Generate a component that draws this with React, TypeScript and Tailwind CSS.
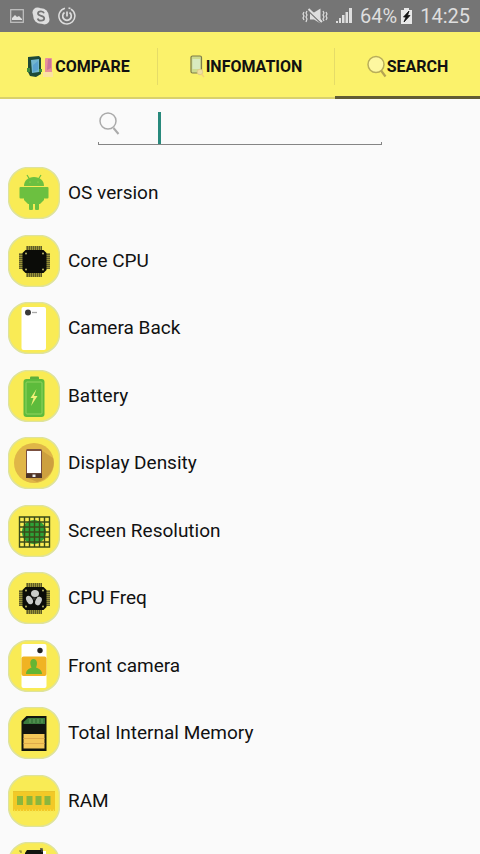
import type { ReactNode } from "react";

const Hole = ({ x, y }: { x: number; y: number }) => <circle cx={x} cy={y} r="1" fill="#b9b56a" />;

function ChipBody() {
  const pins = [18, 20, 22, 24, 26, 28, 30, 32];
  return (
    <g>
      {pins.map((p) => (
        <g key={p} fill="#3a3a1c">
          <rect x={p + 0.500} y="11" width="1.300" height="31" />
          <rect x="11" y={p + 0.500} width="31" height="1.300" />
        </g>
      ))}
      <path d="M17.500 15h18l3 3v17l-3 3h-18l-3-3V18z" fill="#0b0c08" />
      <Hole x={18} y={18.5} />
      <Hole x={35} y={18.5} />
      <Hole x={18} y={34.5} />
      <Hole x={35} y={34.5} />
    </g>
  );
}

const android = (
  <g fill="#6cc040">
    <path d="M16 19c0-5.500 4-9 10-9s10 3.500 10 9z" />
    <path d="M19 8l2.500 4M33 8l-2.500 4" stroke="#6cc040" strokeWidth="1.200" />
    <rect x="11.500" y="20" width="5" height="11.500" rx="1" />
    <rect x="35.500" y="20" width="5" height="11.500" rx="1" />
    <path d="M16 20h20v13l-4 4H20l-4-4z" />
    <rect x="21" y="34" width="4" height="9" rx="1" />
    <rect x="27" y="34" width="4" height="9" rx="1" />
    <circle cx="22" cy="15" r="0.600" fill="#b9db56" />
    <circle cx="30" cy="15" r="0.600" fill="#b9db56" />
  </g>
);

const cameraBack = (
  <g>
    <rect x="13.500" y="5" width="24.500" height="43" rx="2" fill="#fff" />
    <circle cx="20" cy="10.500" r="3" fill="#3a3a3a" />
    <path d="M24 10.500h5" stroke="#aaa" strokeWidth="1.300" />
  </g>
);

const battery = (
  <g>
    <rect x="22" y="6.500" width="9" height="4" rx="1" fill="#5faf3b" />
    <rect x="15.500" y="9" width="21" height="38" rx="3" fill="#5dbb3c" />
    <rect x="18" y="12" width="16" height="32" rx="1" fill="none" stroke="#91d45f" strokeWidth="1" />
    <path d="M28.500 19l-6 9h3l-2.500 8 6.500-10h-3.500z" fill="#f1f078" />
  </g>
);

const density = (
  <g>
    <circle cx="26" cy="26" r="20" fill="#e0b647" />
    <path d="M33 13l12 8c3 10-4 21-16 24l-11-5z" fill="#cda03f" />
    <rect x="18" y="12" width="16" height="29" rx="1.500" fill="#7b5040" />
    <rect x="19" y="14" width="14" height="22" fill="#fff" />
    <rect x="18" y="36.500" width="16" height="4.500" fill="#4d3428" />
    <rect x="24.500" y="37.500" width="3" height="2.500" fill="#eee" />
  </g>
);

const resolution = (
  <g>
    <circle cx="26" cy="27" r="12" fill="#2ea138" />
    <path
      d="M11.500 12h30v30h-30zM11.500 17h30M11.500 22h30M11.500 27h30M11.500 32h30M11.500 37h30M16.500 12v30M21.500 12v30M26.500 12v30M31.500 12v30M36.500 12v30"
      fill="none"
      stroke="#3b4b18"
      strokeWidth="1.400"
    />
  </g>
);

const cpuFan = (
  <g>
    <ChipBody />
    <g fill="#c9cbc9">
      <ellipse cx="27" cy="21.500" rx="4" ry="3.500" />
      <ellipse cx="21.500" cy="28" rx="3" ry="4.500" transform="rotate(-30 21.500 28)" />
      <ellipse cx="30.500" cy="29" rx="3" ry="4.500" transform="rotate(25 30.500 29)" />
    </g>
    <circle cx="26.300" cy="26.500" r="1.400" fill="#333" />
  </g>
);

const frontCamera = (
  <g>
    <rect x="13.500" y="4" width="25" height="44" rx="2" fill="#fff" />
    <circle cx="32" cy="10.500" r="2.700" fill="#222" />
    <rect x="13.500" y="16.500" width="25" height="19.500" rx="2" fill="#f0b323" />
    <path d="M18 34c0-4 3-5.500 5.500-6.500-2-4-1.500-8.500 2-8.500s4.500 4.500 2.500 8.500c3 1 6 2.500 6 6.500z" fill="#64b534" />
  </g>
);

const memoryCard = (
  <g>
    <path d="M18.500 9h20v35h-25V14z" fill="#11150f" />
    <path d="M20 11h17v6H15.500v-2z" fill="#3b7a3d" />
    <path d="M22 12v4M26 12v4M30 12v4M34 12v4" stroke="#62a15e" strokeWidth="1" />
    <rect x="15.500" y="27" width="21" height="14.500" fill="#f4c858" />
    <path d="M15.500 31.500h21M15.500 36.500h21" stroke="#dfab4a" strokeWidth="1" />
  </g>
);

const ram = (
  <g>
    <path d="M5 16h42v20H5z" fill="#f2c927" />
    <path d="M6 35.500h40" stroke="#f6e04a" strokeWidth="2" strokeDasharray="1 2" />
    <path d="M5 16.500h42" stroke="#e9c32b" strokeWidth="1" />
    <g fill="#8bb63c">
      <rect x="9" y="21" width="6" height="9" />
      <rect x="18.500" y="21" width="6" height="9" />
      <rect x="27.500" y="21" width="6" height="9" />
      <rect x="36.500" y="21" width="6" height="9" />
    </g>
  </g>
);

const externalCard = (
  <g>
    <path d="M19 8h16v28H17V11z" fill="#11150f" />
    <path d="M32 7h2v3" stroke="#444" strokeWidth="1.500" fill="none" />
    <path d="M11 9h2v2" stroke="#8a853c" strokeWidth="1.200" fill="none" />
    <path d="M35 9h3v8h-3z" fill="#fff" />
  </g>
);

const specs: { name: string; icon: ReactNode }[] = [
  { name: "OS version", icon: android },
  { name: "Core CPU", icon: <ChipBody /> },
  { name: "Camera Back", icon: cameraBack },
  { name: "Battery", icon: battery },
  { name: "Display Density", icon: density },
  { name: "Screen Resolution", icon: resolution },
  { name: "CPU Freq", icon: cpuFan },
  { name: "Front camera", icon: frontCamera },
  { name: "Total Internal Memory", icon: memoryCard },
  { name: "RAM", icon: ram },
];

function Badge({ children }: { children: ReactNode }) {
  return (
    <svg viewBox="0 0 52 52" className="size-[52px] shrink-0" aria-hidden="true">
      <rect x="0.500" y="0.500" width="51" height="51" rx="20" fill="#f9eb55" stroke="#dfe39a" strokeWidth="1.500" />
      {children}
    </svg>
  );
}

function StatusBar() {
  return (
    <header className="flex h-8 items-center justify-between bg-[#757575] px-[10px] text-[#dedede]">
      <div className="flex items-center gap-2">
        <svg viewBox="0 0 14 14" className="size-[14px]" aria-hidden="true">
          <rect x="0.700" y="0.700" width="12.600" height="12.600" fill="none" stroke="#c4c4c4" strokeWidth="1.200" />
          <path d="M2 11V9l3-3 2 2 2-1 3 3v1z" fill="currentColor" />
        </svg>
        <svg viewBox="0 0 18 18" className="size-[18px]" aria-hidden="true">
          <circle cx="5.500" cy="5.500" r="5" fill="currentColor" />
          <circle cx="12.500" cy="12.500" r="5" fill="currentColor" />
          <circle cx="9" cy="9" r="7.800" fill="currentColor" />
          <path
            d="M12 6.300C11.500 4.800 10.300 4.300 9 4.300c-1.700 0-3 .8-3 2.200 0 3 6.200 1.600 6.200 4.700 0 1.500-1.400 2.400-3.200 2.400-1.600 0-2.900-.7-3.300-2.200"
            fill="none"
            stroke="#757575"
            strokeWidth="1.800"
          />
        </svg>
        <svg viewBox="0 0 18 18" className="size-[18px]" fill="none" stroke="currentColor" aria-hidden="true">
          <path d="M7 1.200a8 8 0 1 0 6 .9M10.500 1.100l2 .5" strokeWidth="1.500" />
          <path d="M6.500 5.500a4.300 4.300 0 1 0 5 0M9 4.500v5" strokeWidth="1.700" />
        </svg>
      </div>
      <div className="flex items-center gap-2">
        <svg viewBox="0 0 26 16" className="h-4 w-[26px]" fill="none" stroke="currentColor" aria-hidden="true">
          <path d="M8 4.500h4l6.500-4v15l-6.500-4H8z" fill="currentColor" stroke="none" />
          <path d="M6.500 3L20 16" stroke="#757575" strokeWidth="1.500" />
          <path d="M6.500 1L20 14" strokeWidth="2" />
          <path
            d="M5 3l-1 2 1 2-1 2 1 2-1 3M2 4l-1 2 1 2-1 2 1 2M21 3l1 2-1 2 1 2-1 2 1 2M24 4l1 2-1 2 1 2-1 2"
            strokeWidth="1.200"
          />
        </svg>
        <svg viewBox="0 0 16 16" className="size-4" fill="currentColor" aria-hidden="true">
          <path d="M0 13h2v2H0zM3 10h2v5H3zM6 7h2.500v8H6zM9.500 4H12v11H9.500zM13 0h3v15h-3z" />
        </svg>
        <span className="text-[20px] leading-6">64%</span>
        <svg viewBox="0 0 11 16" className="-ml-1 h-4 w-[11px]" aria-hidden="true">
          <path d="M3 0h5v2h3v14H0V2h3z" fill="#e8e8e8" />
          <path d="M8 3L2.500 9H5l-2 5 6-6.500H6.500z" fill="#111" stroke="#111" strokeWidth="0.800" />
        </svg>
        <span className="text-[20px] leading-6">14:25</span>
      </div>
    </header>
  );
}

const compareIcon = (
  <svg viewBox="0 0 28 22" className="h-[22px] w-7" aria-hidden="true">
    <path d="M1 1l11-1 2 2v16l-5 3-6-1-2-4z" fill="#1d4a38" />
    <path d="M0 12h3v4H0zM12 13h3v3h-3z" fill="#3d8a3c" />
    <path d="M4 4l8-1v13l-7 1z" fill="#72b6cf" />
    <path d="M6 9l5-4v9l-5 2z" fill="#5aa2cf" />
    <rect x="18" y="2" width="7" height="15" rx="1" fill="#e9909a" />
    <path d="M21 3h3v9l-4 2z" fill="#c9749a" />
    <rect x="16" y="16" width="10" height="5" fill="#fbe3a0" />
  </svg>
);

const infoIcon = (
  <svg viewBox="0 0 16 26" className="h-[26px] w-4" aria-hidden="true">
    <rect x="1" y="2" width="10.500" height="17" rx="1.500" fill="#cddb8e" stroke="#7d7b49" strokeWidth="1.200" />
    <rect x="2.500" y="5" width="7.500" height="10" fill="#d8eac0" />
    <circle cx="10" cy="18" r="2.800" fill="#f0dfa0" stroke="#dcc687" strokeWidth="0.800" />
    <path d="M11.500 20l2.500 3" stroke="#f5cf80" strokeWidth="1.300" />
  </svg>
);

const searchTabIcon = (
  <svg viewBox="0 0 20 24" className="h-6 w-5" aria-hidden="true">
    <circle cx="9" cy="9.500" r="8" fill="#fdf7a0" stroke="#b8ad5a" strokeWidth="1.500" />
    <path d="M14 15.500l4.500 6" stroke="#b5a452" strokeWidth="2.200" />
  </svg>
);

const tabs = [
  { label: "COMPARE", icon: compareIcon, selected: false },
  { label: "INFOMATION", icon: infoIcon, selected: false },
  { label: "SEARCH", icon: searchTabIcon, selected: true },
];

export default function App() {
  return (
    <div className="h-screen overflow-hidden bg-[#fafafa] font-[Roboto,sans-serif] text-[#111]">
      <StatusBar />
      <nav role="tablist" className="grid h-[67px] grid-cols-[158fr_177fr_145fr] bg-[#fbf26b]">
        {tabs.map((tab) => (
          <button
            key={tab.label}
            role="tab"
            aria-selected={tab.selected}
            className={
              tab.selected
                ? "flex items-stretch border-b-[3px] border-[#625c34] pt-4 pb-[11px]"
                : "flex items-stretch border-b-2 border-[#d9d16c] pt-4 pb-3"
            }
          >
            <span
              className={
                tab.selected
                  ? "flex flex-1 items-center justify-center"
                  : "flex flex-1 items-center justify-center border-r border-[#e5dc68]"
              }
            >
              {tab.icon}
              <span className="text-[16px] leading-5 font-bold">{tab.label}</span>
            </span>
          </button>
        ))}
      </nav>
      <main>
        <div className="relative mx-auto mt-[13px] w-[284px]">
          <input
            type="text"
            aria-label="Search specifications"
            className="block h-[33px] w-full border-b border-[#858585] bg-transparent pr-2 pl-[62px] text-[18px] caret-transparent outline-none"
          />
          <svg viewBox="0 0 22 24" className="absolute top-0 left-0 h-6 w-[22px]" fill="none" stroke="#aaa" aria-hidden="true">
            <circle cx="10" cy="9" r="8" strokeWidth="1.500" />
            <path d="M15.500 16l5 6" strokeWidth="2" />
          </svg>
          <span className="absolute top-0 left-[60px] h-8 w-[3px] bg-[#28897c]" />
          <span className="absolute bottom-0 left-0 h-[3px] w-px bg-[#858585]" />
          <span className="absolute right-0 bottom-0 h-[3px] w-px bg-[#858585]" />
        </div>
        <ul className="mt-[14px]">
          {specs.map((spec) => (
            <li key={spec.name} className="odd:h-[67px] even:h-[68px]">
              <button className="flex h-full w-full items-center gap-2 px-2 pt-px text-left text-[19px] leading-6">
                <Badge>{spec.icon}</Badge>
                {spec.name}
              </button>
            </li>
          ))}
          <li className="px-2 pt-2">
            <Badge>{externalCard}</Badge>
          </li>
        </ul>
      </main>
    </div>
  );
}
